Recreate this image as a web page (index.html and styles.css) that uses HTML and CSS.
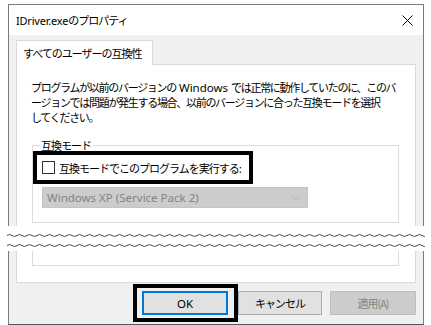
FILE: index.html
```html
<!DOCTYPE html>
<html lang="ja">
<head>
  <meta charset="UTF-8">
  <title>IDriver.exeのプロパティ</title>
  <link rel="stylesheet" href="styles.css">
</head>
<body>
  <div class="win win-top">
    <div class="titlebar">
      <span class="title"><span class="latin">IDriver.exe</span>のプロパティ</span>
      <svg class="close" width="11" height="11" viewBox="0 0 11 11">
        <path d="M0.5 0.5 L10.5 10.5 M10.5 0.5 L0.5 10.5" stroke="#000" stroke-width="1" fill="none"/>
      </svg>
    </div>
    <div class="client">
      <div class="tabs">
        <div class="tab">すべてのユーザーの互換性</div>
      </div>
      <div class="panel panel-top">
        <p class="intro">プログラムが以前のバージョンの<span class="latin"> Windows </span>では正常に動作していたのに、このバ<br>ージョンでは問題が発生する場合、以前のバージョンに合った互換モードを選択<br>してください。</p>
        <fieldset class="group">
          <legend>互換モード</legend>
          <div class="mark mark-check">
            <span class="checkbox"></span>
            <span>互換モードでこのプログラムを実行する:</span>
          </div>
          <div class="combo">
            <span class="latin">Windows XP (Service Pack 2)</span>
            <svg width="9" height="5" viewBox="0 0 9 5">
              <path d="M0.5 0.5 L4.5 4.5 L8.5 0.5" stroke="#b4b4b4" fill="none"/>
            </svg>
          </div>
        </fieldset>
      </div>
    </div>
  </div>

  <div class="tear">
    <svg width="418" height="25" viewBox="0 0 418 25">
      <defs>
        <pattern id="wave" width="10" height="25" patternUnits="userSpaceOnUse">
          <path d="M0 9.5 Q2.5 7.5 5 9.5 T10 9.5 M0 19.5 Q2.5 17.5 5 19.5 T10 19.5" stroke="#333" stroke-width="0.9" fill="none"/>
        </pattern>
      </defs>
      <rect width="418" height="25" fill="url(#wave)"/>
    </svg>
  </div>

  <div class="win win-bottom">
    <div class="client">
      <div class="panel panel-bottom">
        <div class="group group-end"></div>
      </div>
      <div class="buttons">
        <div class="mark mark-ok">
          <button class="btn btn-default"><span class="latin">OK</span></button>
        </div>
        <button class="btn">キャンセル</button>
        <button class="btn btn-disabled">適用(A)</button>
      </div>
    </div>
  </div>
</body>
</html>
```

FILE: styles.css
```css
* { box-sizing: border-box; }
body {
  margin: 0;
  background: #fff;
  font-family: "Noto Sans CJK JP", sans-serif;
  font-size: 11px;
  letter-spacing: -1px;
  color: #000;
}
.latin {
  font-family: "Noto Sans", sans-serif;
  font-size: 11.5px;
  letter-spacing: 0;
}
.title .latin {
  font-size: 11px;
  letter-spacing: -0.2px;
}
.win {
  width: 416px;
  margin-left: 8px;
  border: 1px solid #7a7a7a;
}
.win-top {
  margin-top: 4px;
  border-bottom: none;
}
.win-bottom {
  border-top: none;
  border-bottom-color: #555;
}
.titlebar {
  height: 30px;
  background: #fff;
  display: flex;
  align-items: center;
  justify-content: space-between;
  padding: 0 10px 0 7px;
}
.client {
  background: #f0f0f0;
  padding: 5px 7px 0;
}
.win-bottom .client { padding-top: 0; }
.tabs { display: flex; }
.tab {
  position: relative;
  width: 137px;
  height: 25px;
  margin-bottom: -1px;
  padding-left: 6px;
  line-height: 24px;
  background: #fff;
  border: 1px solid #d9d9d9;
  border-bottom: none;
  white-space: nowrap;
}
.panel {
  background: #fff;
  border: 1px solid #d9d9d9;
}
.panel-top {
  border-bottom: none;
  padding: 15px 0 3px;
}
.panel-bottom {
  border-top: none;
  padding-bottom: 16px;
}
.intro {
  margin: 0;
  padding-left: 14px;
  line-height: 15px;
  letter-spacing: -1.3px;
  white-space: pre;
}
.group {
  margin: 13px 0 0 15px;
  width: 367px;
  padding: 0 0 14px;
  border: 1px solid #dcdcdc;
}
.group legend {
  margin-left: 7px;
  padding: 0 2px 0 1px;
  line-height: 15px;
}
.group-end {
  margin-top: 0;
  height: 10px;
  border-top: none;
}
.mark {
  border: 4px solid #000;
  display: flex;
  align-items: center;
}
.mark-check {
  margin-top: -2px;
  width: 220px;
  height: 33px;
  padding-left: 5px;
  gap: 4px;
  white-space: nowrap;
}
.checkbox {
  width: 13px;
  height: 13px;
  border: 1px solid #333;
  background: #fff;
  flex: none;
}
.combo {
  margin: 3px 0 0 9px;
  width: 266px;
  height: 21px;
  padding: 0 7px 0 4px;
  display: flex;
  align-items: center;
  justify-content: space-between;
  background: #cccccc;
  border: 1px solid #c4c4c4;
  color: #838383;
}
.buttons {
  display: flex;
  justify-content: flex-end;
  align-items: center;
  margin-top: 1px;
  padding-bottom: 2px;
}
.mark-ok {
  width: 105px;
  height: 38px;
  padding-left: 5px;
  background: #f0f0f0;
}
.btn {
  height: 24px;
  width: 84px;
  font: inherit;
  letter-spacing: inherit;
  color: #000;
  background: #e1e1e1;
  border: 1px solid #adadad;
  padding: 0;
}
.btn-default {
  width: 86px;
  border: 2px solid #0078d7;
}
.btn-disabled {
  width: 86px;
  margin-left: 8px;
  background: #cccccc;
  border-color: #bfbfbf;
  color: #838383;
}
.tear {
  height: 25px;
  margin-left: 7px;
  background: #fff;
}
.tear svg { display: block; }
```
